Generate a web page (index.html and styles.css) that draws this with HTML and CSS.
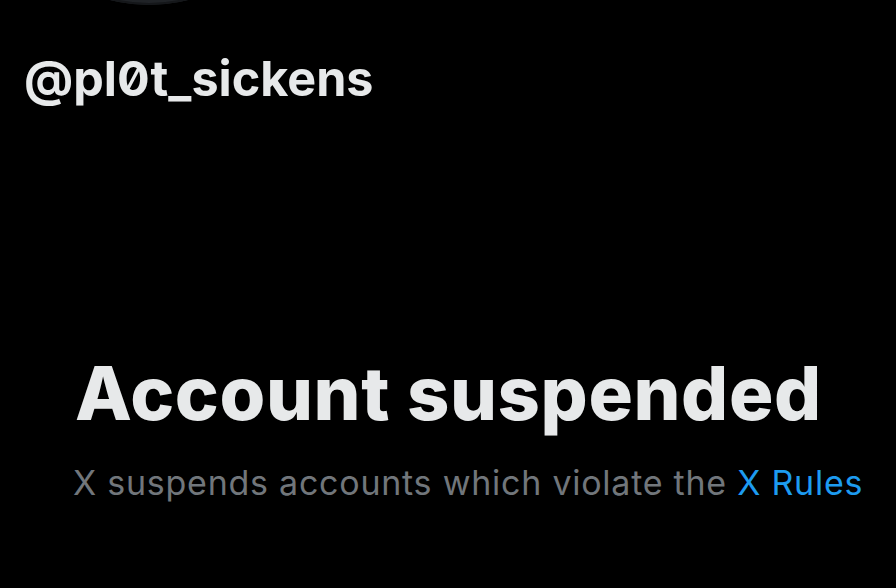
FILE: index.html
```html
<!DOCTYPE html>
<html lang="en">
<head>
<meta charset="utf-8">
<title>Account suspended</title>
<link rel="stylesheet" href="styles.css">
</head>
<body>
<div class="page">
  <header class="profile">
    <div class="avatar"></div>
    <div class="handle">@pl0t_sickens</div>
  </header>
  <main class="notice">
    <h1 class="title">Account suspended</h1>
    <p class="desc">X suspends accounts which violate the <a class="link" href="#">X Rules</a></p>
  </main>
</div>
</body>
</html>
```
FILE: styles.css
```css
html, body {
  margin: 0;
  padding: 0;
  background: #000;
}
.page {
  width: 896px;
  height: 588px;
  overflow: hidden;
  font-family: "Inter", "Roboto", sans-serif;
  font-feature-settings: "zero" 1;
}
.profile {
  display: flex;
  flex-direction: column;
  padding-left: 24px;
}
.avatar {
  width: 310px;
  height: 310px;
  margin-left: -30px;
  margin-top: -305px;
  border-radius: 50%;
  background: #202327;
  box-shadow: inset 0 0 0 2px #15171a;
}
.handle {
  margin-top: 50px;
  font-size: 48.5px;
  font-weight: 700;
  color: #e7e9ea;
  line-height: 1;
}
.notice {
  padding-left: 75px;
  margin-top: 252px;
}
.title {
  margin: 0;
  font-size: 74px;
  font-weight: 800;
  color: #e7e9ea;
  line-height: 1;
  letter-spacing: 0.62px;
}
.desc {
  margin: 36px 0 0 -2px;
  font-size: 34px;
  font-weight: 400;
  color: #71767b;
  line-height: 1;
  letter-spacing: 0.75px;
}
.link {
  color: #1d9bf0;
  text-decoration: none;
}
```
